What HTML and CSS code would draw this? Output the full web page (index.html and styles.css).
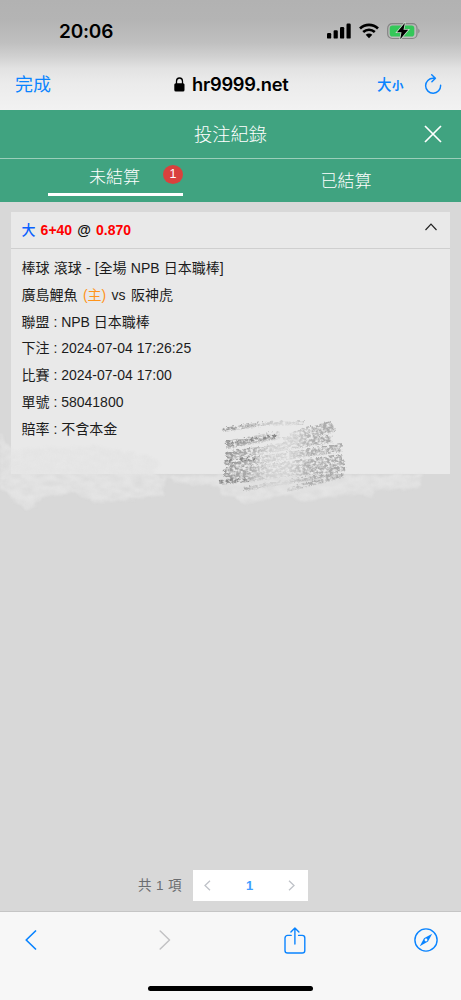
FILE: index.html
```html
<!DOCTYPE html>
<html lang="zh-Hant">
<head>
<meta charset="utf-8">
<title>投注紀錄</title>
<link rel="stylesheet" href="styles.css">
</head>
<body>
<div class="phone">
  <header class="browser-top">
    <div class="status">
      <span class="clock">20:06</span>
      <svg class="signal" width="24" height="16" viewBox="0 0 24 16"><rect x="0" y="10" width="4.2" height="5.6" rx="1.2"/><rect x="6.6" y="7.3" width="4.2" height="8.3" rx="1.2"/><rect x="13" y="4" width="4.2" height="11.6" rx="1.2"/><rect x="19.5" y="0.5" width="4.2" height="15.1" rx="1.2"/></svg>
      <svg class="wifi" width="20" height="16" viewBox="0 0 20 16" fill="none" stroke="#000" stroke-width="2.7"><path d="M1 5.5C6.2.7 13.8.7 19 5.5M4.2 9C7.6 6 12.4 6 15.8 9"/><path d="M6.7 11.7C8.6 10 11.4 10 13.3 11.7L10 15.2Z" fill="#000" stroke="none"/></svg>
      <svg class="battery" width="34" height="18" viewBox="0 0 34 18"><rect x=".7" y="1.7" width="29.3" height="14.8" rx="4.5" fill="none" stroke="#858585" stroke-width="1.2"/><rect x="2.7" y="3.6" width="24.6" height="11" rx="2.8" fill="#34c759"/><path d="M31.3 6.5Q34 9 31.3 11.5Z" fill="#858585"/><path d="M17.8 1L10 10.2H14.5L13.2 17.2L21.2 7.8H16.5Z" fill="#000" stroke="#c6d9ca" stroke-width="1.6" paint-order="stroke"/></svg>
    </div>
    <div class="address">
      <span class="done">完成</span>
      <svg class="lock" width="11" height="15" viewBox="0 0 11 15"><path d="M2.5 7V4.2a3 3.2 0 0 1 6 0V7" fill="none" stroke="#000" stroke-width="1.3"/><rect x=".3" y="6.3" width="10.2" height="8.2" rx="1.5"/></svg>
      <span class="host">hr9999.net</span>
      <span class="size-big">大</span><span class="size-small">小</span>
      <svg class="reload" width="18" height="20" viewBox="0 0 18 20" fill="none" stroke="#0a84ff" stroke-width="1.45" stroke-linecap="round" stroke-linejoin="round"><path d="M11 4.2H9.2A7.5 7.5 0 1 0 16.6 11.3M7.7 .8L11.4 4.2L7.9 7.7"/></svg>
    </div>
  </header>
  <div class="title-bar">
    <h1 class="title">投注紀錄</h1>
    <svg class="close" width="18" height="18" viewBox="0 0 18 18" fill="none" stroke="#fff" stroke-width="1.7"><path d="M1 1L17 17M17 1L1 17"/></svg>
  </div>
  <nav class="tabs">
    <div class="tab tab-active"><span class="tab-label">未結算</span><span class="badge">1</span></div>
    <div class="tab"><span class="tab-label">已結算</span></div>
  </nav>
  <main class="content">
    <article class="card">
      <div class="card-head">
        <strong class="bet"><span class="blue">大</span> <span class="red">6+40</span> @ <span class="red">0.870</span></strong>
        <svg width="12" height="8" viewBox="0 0 12 8" fill="none" stroke="#222" stroke-width="1.2"><path d="M.5 7L6 1.2L11.5 7"/></svg>
      </div>
      <div class="card-body">
        <div class="row row-match">棒球 滾球 - [全場 NPB 日本職棒]</div>
        <div class="row row-teams">廣島鯉魚 <span class="home">(主)</span> vs 阪神虎</div>
        <div class="row">聯盟 : NPB 日本職棒</div>
        <div class="row">下注 : 2024-07-04 17:26:25</div>
        <div class="row">比賽 : 2024-07-04 17:00</div>
        <div class="row">單號 : 58041800</div>
        <div class="row">賠率 : 不含本金</div>
      </div>
    </article>
    <svg class="scribble" width="461" height="120" viewBox="0 400 461 120">
      <defs>
        <filter id="chalk" x="-5%" y="-10%" width="110%" height="120%" color-interpolation-filters="sRGB">
          <feTurbulence type="fractalNoise" baseFrequency=".09 .22" numOctaves="3" seed="8" result="n"/>
          <feDisplacementMap in="SourceGraphic" in2="n" scale="8" xChannelSelector="R" yChannelSelector="G" result="d"/>
          <feColorMatrix in="n" values="0 0 0 0 0  0 0 0 0 0  0 0 0 0 0  0 1.5 0 0 0" result="m"/>
          <feComposite in="d" in2="m" operator="in"/>
          <feGaussianBlur stdDeviation="1"/>
        </filter>
        <filter id="pencil" x="-5%" y="-10%" width="110%" height="120%" color-interpolation-filters="sRGB">
          <feTurbulence type="fractalNoise" baseFrequency=".3 .4" numOctaves="4" seed="5" result="n"/>
          <feDisplacementMap in="SourceGraphic" in2="n" scale="5" xChannelSelector="R" yChannelSelector="G" result="d"/>
          <feColorMatrix in="n" values="0 0 0 0 0  0 0 0 0 0  0 0 0 0 0  0 3 0 0 -.9" result="m"/>
          <feComposite in="d" in2="m" operator="in"/>
          <feGaussianBlur stdDeviation=".5"/>
        </filter>
        <linearGradient id="shade" gradientUnits="userSpaceOnUse" x1="218" y1="455" x2="346" y2="470">
          <stop offset="0" stop-color="#949494"/><stop offset=".25" stop-color="#acacac"/><stop offset=".4" stop-color="#cfcfcf"/><stop offset=".55" stop-color="#d4d4d4"/><stop offset=".72" stop-color="#aeaeae"/><stop offset="1" stop-color="#a9a9a9"/>
        </linearGradient>
      </defs>
      <g filter="url(#chalk)" fill="#e4e4e4">
        <path d="M0 433L12 450L95 447L148 456L160 464L153 473L165 479L163 495L125 500L96 502L75 493L45 496L27 511L0 488Z"/>
        <path d="M160 475H222L421 475L420 488L375 490L373 496L345 494L300 503L294 494L240 504L236 497L221 496L218 486L178 483Z"/>
      </g>
      <g filter="url(#pencil)" fill="none" stroke="url(#shade)" stroke-linejoin="round">
        <path d="M222 430L262 424L304 423M290 435L331 423" stroke-width="4"/>
        <path d="M226 445L280 435M284 442L334 428M226 456L332 439M225 465L342 448M224 473L343 459M226 479L345 467" stroke-width="8"/>
        <path d="M220 483L280 476L341 470M288 490L344 475M244 489L338 474" stroke-width="4"/>
        <path d="M229 443L276 437M227 462L254 459M219 482L248 480" stroke="#898989" stroke-width="4"/>
      </g>
    </svg>
    <div class="pagination">
      <span class="total">共 1 項</span>
      <div class="pager">
        <svg width="7" height="11" viewBox="0 0 7 11" fill="none" stroke="#bfc2c8" stroke-width="1.3"><path d="M6 .8L1 5.5L6 10.2"/></svg>
        <span class="page">1</span>
        <svg width="7" height="11" viewBox="0 0 7 11" fill="none" stroke="#bfc2c8" stroke-width="1.3"><path d="M1 .8L6 5.5L1 10.2"/></svg>
      </div>
    </div>
  </main>
  <footer class="toolbar">
    <div class="tools">
      <svg width="12" height="20" viewBox="0 0 12 20" fill="none" stroke="#0a84ff" stroke-width="1.7" stroke-linecap="round" stroke-linejoin="round"><path d="M10.5 1L1.2 10L10.5 19"/></svg>
      <svg width="12" height="20" viewBox="0 0 12 20" fill="none" stroke="#c2c2c4" stroke-width="1.5" stroke-linecap="round" stroke-linejoin="round"><path d="M1.2 1L10.5 10L1.2 19"/></svg>
      <svg width="22" height="27" viewBox="0 0 22 27" fill="none" stroke="#0a84ff" stroke-width="1.4" stroke-linecap="round" stroke-linejoin="round"><path d="M7.2 8.4H3.6A2.6 2.6 0 0 0 1 11V23.4A2.6 2.6 0 0 0 3.6 26H18.2A2.6 2.6 0 0 0 20.8 23.4V11A2.6 2.6 0 0 0 18.2 8.4H14.6M10.9 17V1.2M6.9 5L10.9 1L14.9 5"/></svg>
      <svg width="24" height="24" viewBox="0 0 24 24"><circle cx="12" cy="12" r="11.1" fill="none" stroke="#0a84ff" stroke-width="1.4"/><path d="M18.2 5.8L14 13.6L5.8 18.2L10 10.2Z" fill="#0a84ff"/><circle cx="12" cy="12" r="1.4" fill="#f7f7f7"/></svg>
    </div>
    <div class="home-bar"></div>
  </footer>
</div>
</body>
</html>
```
FILE: styles.css
```css
* { box-sizing: border-box; }
body {
  margin: 0;
  font-family: "Liberation Sans", "Noto Sans CJK TC", sans-serif;
  color: #1c1c1c;
}
svg { display: block; flex: none; }
.phone {
  width: 461px;
  height: 1000px;
  display: flex;
  flex-direction: column;
  overflow: hidden;
  background: #d8d8d8;
}
.browser-top {
  height: 110px;
  flex: none;
  background: linear-gradient(#b2b2b2 0, #b4b4b4 20px, #c0c0c0 43px, #d0d0d0 56px, #e2e2e2 68px, #ebebeb 83px, #f2f2f2 110px);
}
.status { height: 62px; display: flex; align-items: center; padding-left: 59px; }
.clock {
  width: 268px;
  padding-top: 1px;
  font: 600 19px/24px Inter, sans-serif;
  letter-spacing: -.2px;
  color: #000;
}
.wifi { margin-left: 8px; }
.battery { margin-left: 8px; }
.address { height: 44px; display: flex; align-items: center; padding-left: 15px; color: #0a84ff; }
.done { width: 159px; padding-top: 1px; font-size: 18px; font-weight: 400; line-height: 24px; }
.host {
  width: 185px;
  margin-left: 7px;
  font: 600 18.3px/24px Inter, sans-serif;
  letter-spacing: -.25px;
  color: #000;
}
.size-big { width: 15px; padding-bottom: 2px; font-size: 14.5px; font-weight: 500; }
.size-small { width: 32px; font-size: 11.5px; font-weight: 700; padding-top: 1px; }
.title-bar {
  height: 49px;
  flex: none;
  display: grid;
  grid-template-columns: 50px 1fr 50px;
  align-items: center;
  background: #40a380;
  border-bottom: 1px solid #9bceba;
  color: #fff;
}
.title { grid-column: 2; margin: 2px 0 0; text-align: center; font-size: 18.3px; font-weight: 300; line-height: 26px; }
.close { justify-self: center; margin: 0 6px 1px 0; }
.tabs { height: 43px; flex: none; display: flex; background: #40a380; color: #fff; }
.tab { flex: 1; display: flex; justify-content: center; padding-top: 10px; font-size: 17px; font-weight: 300; line-height: 26px; }
.tab-active {
  flex: none;
  width: 135px;
  height: 37px;
  margin: 0 48px;
  padding: 6px 0 0 41px;
  justify-content: flex-start;
  border-bottom: 3px solid #fff;
}
.tab-label { width: 51px; white-space: nowrap; }
.badge {
  width: 20px;
  height: 19px;
  margin-left: 23px;
  border-radius: 50%;
  background: #d9413d;
  text-align: center;
  font-size: 12.5px;
  font-weight: 400;
  line-height: 19px;
}
.content { flex: 1; display: flex; flex-direction: column; position: relative; padding: 10px 11px 0; }
.card { height: 262px; background: #e9e9e9; }
.card-head {
  height: 37px;
  display: flex;
  align-items: center;
  justify-content: space-between;
  padding: 0 13px 7px 10.5px;
  border-bottom: 1px solid #cfcfcf;
}
.bet { padding-top: 7px; font-size: 14px; line-height: 22px; color: #111; white-space: pre; word-spacing: 1.2px; }
.blue { color: #0a60ff; font-weight: 500; }
.red { color: #f00; }
.card-body { padding: 6px 10.5px; }
.row { height: 26.8px; font-size: 14px; line-height: 27px; white-space: nowrap; }
.row-match { word-spacing: .3px; }
.row-teams { word-spacing: 1.5px; }
.home { color: #ff941a; }
.scribble { position: absolute; left: 0; top: 198px; }
.pagination { display: flex; align-items: center; height: 30px; margin: auto 0 11px 127px; }
.total { width: 55px; padding-bottom: 2px; font-size: 13.5px; color: #6b6d70; white-space: nowrap; word-spacing: .8px; }
.pager { width: 115px; height: 31px; display: flex; align-items: center; justify-content: space-between; padding: 0 13px 0 11px; background: #fff; }
.page { font-size: 13px; font-weight: 700; color: #409eff; }
.toolbar { height: 89px; flex: none; border-top: 1px solid #c5c5c5; background: #f7f7f7; }
.tools { height: 77px; display: grid; grid-template-columns: 134px 125px 130px 24px; padding: 0 0 21px 25px; align-items: center; }
.home-bar { width: 165px; height: 5px; margin: -3px auto 0; border-radius: 3px; background: #000; }
```
